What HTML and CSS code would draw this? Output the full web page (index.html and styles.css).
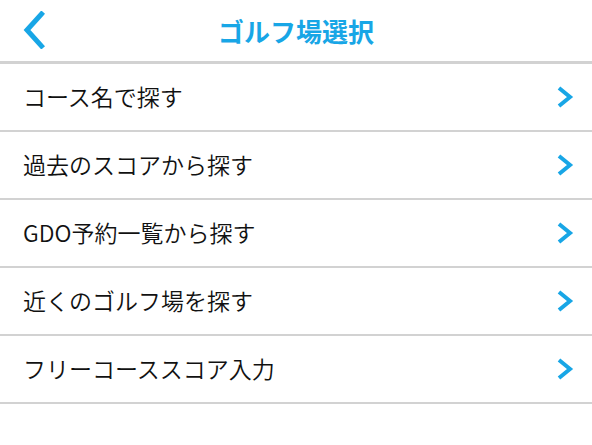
FILE: index.html
```html
<!DOCTYPE html>
<html lang="ja">
<head>
    <meta charset="UTF-8">
    <meta name="viewport" content="width=device-width, initial-scale=1.0">
    <title>ゴルフ場選択</title>
    <link rel="stylesheet" href="styles.css">
</head>
<body>
    <header class="nav-bar">
        <a href="#" class="back-button">
            <svg width="22" height="38" viewBox="0 0 22 38">
                <path d="M18.5 3 L4 19 L18.5 35" fill="none" stroke="currentColor" stroke-width="5" stroke-linecap="square"/>
            </svg>
        </a>
        <h1 class="nav-title">ゴルフ場選択</h1>
    </header>

    <ul class="menu-list">
        <li class="menu-item"><span>コース名で探す</span><svg class="chevron" width="20" height="24" viewBox="0 0 20 24"><path d="M4 3 L15 12 L4 21" fill="none" stroke="currentColor" stroke-width="4"/></svg></li>
        <li class="menu-item"><span>過去のスコアから探す</span><svg class="chevron" width="20" height="24" viewBox="0 0 20 24"><path d="M4 3 L15 12 L4 21" fill="none" stroke="currentColor" stroke-width="4"/></svg></li>
        <li class="menu-item"><span>GDO予約一覧から探す</span><svg class="chevron" width="20" height="24" viewBox="0 0 20 24"><path d="M4 3 L15 12 L4 21" fill="none" stroke="currentColor" stroke-width="4"/></svg></li>
        <li class="menu-item"><span>近くのゴルフ場を探す</span><svg class="chevron" width="20" height="24" viewBox="0 0 20 24"><path d="M4 3 L15 12 L4 21" fill="none" stroke="currentColor" stroke-width="4"/></svg></li>
        <li class="menu-item"><span>フリーコーススコア入力</span><svg class="chevron" width="20" height="24" viewBox="0 0 20 24"><path d="M4 3 L15 12 L4 21" fill="none" stroke="currentColor" stroke-width="4"/></svg></li>
    </ul>
</body>
</html>
```

FILE: styles.css
```css
* {
    margin: 0;
    padding: 0;
    box-sizing: border-box;
}

body {
    background: #fff;
    color: #111;
    font-family: "Noto Sans CJK JP", "Noto Sans", sans-serif;
}

.nav-bar {
    position: relative;
    height: 64px;
    display: flex;
    justify-content: center;
    align-items: center;
    border-bottom: 3px solid #d2d2d2;
}

.back-button {
    position: absolute;
    left: 23px;
    top: 11px;
    color: #18a6e6;
    display: block;
    line-height: 0;
}

.nav-title {
    font-size: 26px;
    font-weight: bold;
    color: #18a6e6;
    line-height: 1;
    margin-top: 1px;
}

.menu-list {
    list-style: none;
}

.menu-item {
    height: 68px;
    display: flex;
    align-items: center;
    justify-content: space-between;
    padding: 0 17px 0 23px;
    border-bottom: 2px solid #d2d2d2;
    font-size: 23px;
    font-weight: 350;
    line-height: 1;
}

.menu-item span {
    margin-top: -2px;
}

.chevron {
    color: #18a6e6;
    margin-top: -1px;
}
```
